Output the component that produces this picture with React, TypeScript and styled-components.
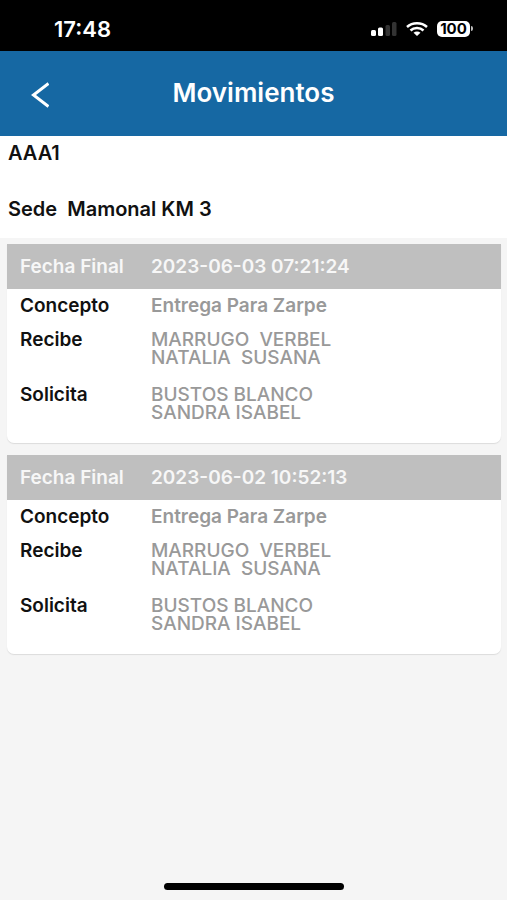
import React from "react";
import styled, { createGlobalStyle } from "styled-components";

const GlobalStyle = createGlobalStyle`
  *, *::before, *::after { box-sizing: border-box; }
  body {
    margin: 0;
    background: #f5f5f5;
    color: #111111;
    font-family: Inter, "Liberation Sans", sans-serif;
    font-size: 19px;
    font-weight: 600;
    line-height: 18px;
  }
`;

const Screen = styled.div`
  display: flex;
  flex-direction: column;
  min-height: 100vh;
`;

const StatusBar = styled.div`
  display: flex;
  align-items: center;
  justify-content: space-between;
  height: 51px;
  padding: 6px 34px 0 54px;
  background: #000000;
  color: #ffffff;
`;

const Clock = styled.time`
  font-size: 22px;
  line-height: 24px;
`;

const StatusIcons = styled.div`
  display: flex;
  align-items: center;
  gap: 9px;
`;

const BatteryGroup = styled.div`
  display: flex;
  align-items: center;
  gap: 1px;
`;

const Battery = styled.span`
  width: 33px;
  border-radius: 5px;
  background: #ffffff;
  color: #000000;
  font-size: 15px;
  font-weight: 700;
  line-height: 16px;
  text-align: center;
`;

const BatteryTip = styled.span`
  width: 2px;
  height: 5px;
  border-radius: 0 2px 2px 0;
  background: #bbbbbb;
`;

const NavBar = styled.header`
  display: grid;
  grid-template-columns: 48px 1fr 48px;
  align-items: center;
  height: 85px;
  padding: 0 16px;
  background: #1668a3;
  color: #ffffff;
`;

const BackButton = styled.button`
  display: flex;
  align-items: center;
  justify-content: center;
  height: 48px;
  padding: 2px 0 0;
  border: 0;
  background: none;
  color: inherit;
  cursor: pointer;
`;

const Title = styled.h1`
  margin: 0;
  padding-bottom: 2px;
  font-size: 26px;
  font-weight: 600;
  line-height: 28px;
  text-align: center;
`;

const Summary = styled.section`
  display: flex;
  flex-direction: column;
  gap: 38px;
  padding: 8px 8px 20px;
  background: #ffffff;
  font-size: 20px;
`;

const SummaryLine = styled.p`
  margin: 0;
  white-space: pre-wrap;
`;

const CardList = styled.main`
  display: flex;
  flex: 1;
  flex-direction: column;
  gap: 12px;
  padding: 6px 6px 12px 7px;
`;

const Card = styled.article`
  border-radius: 0 0 7px 7px;
  background: #ffffff;
  box-shadow: 0 1px 1px #dcdcdc;
`;

const FieldList = styled.dl`
  margin: 0;
`;

const Banner = styled(FieldList)`
  padding: 14px 13px 13px;
  background: #bfbfbf;
  color: #f7f7f7;
`;

const CardBody = styled(FieldList)`
  display: flex;
  flex-direction: column;
  gap: 16px;
  padding: 8px 13px 18px;
  color: #999999;
`;

const Field = styled.div`
  display: grid;
  grid-template-columns: 131px minmax(0, 1fr);
`;

const Label = styled.dt<{ $light?: boolean }>`
  color: ${({ $light }) => ($light ? "inherit" : "#111111")};
`;

const Value = styled.dd<{ $name?: boolean }>`
  margin: 0;
  padding-bottom: ${({ $name }) => ($name ? "3px" : "0")};
  font-weight: ${({ $name }) => ($name ? 500 : 600)};
  white-space: pre-wrap;
`;

const Footer = styled.footer`
  display: flex;
  justify-content: center;
  padding-bottom: 10px;
`;

const HomeIndicator = styled.div`
  width: 180px;
  height: 7px;
  border-radius: 4px;
  background: #000000;
`;

interface Movement {
  date: string;
  concept: string;
  receiver: string;
  requester: string;
}

const movements: Movement[] = [
  {
    date: "2023-06-03 07:21:24",
    concept: "Entrega Para Zarpe",
    receiver: "MARRUGO  VERBEL\nNATALIA  SUSANA",
    requester: "BUSTOS BLANCO\nSANDRA ISABEL",
  },
  {
    date: "2023-06-02 10:52:13",
    concept: "Entrega Para Zarpe",
    receiver: "MARRUGO  VERBEL\nNATALIA  SUSANA",
    requester: "BUSTOS BLANCO\nSANDRA ISABEL",
  },
];

const SignalIcon = () => (
  <svg width="26" height="14" viewBox="0 0 26 14" aria-hidden="true">
    <rect x="0" y="8" width="5" height="6" rx="1.5" fill="#fff" />
    <rect x="7" y="5.5" width="5" height="8.5" rx="1.5" fill="#fff" />
    <rect x="14.500" y="3" width="4.500" height="11" rx="1.5" fill="#333" />
    <rect x="21" y="0" width="4.500" height="14" rx="1.5" fill="#333" />
  </svg>
);

const WifiIcon = () => (
  <svg width="22" height="14" viewBox="0 0 22 14" aria-hidden="true" fill="none" stroke="#fff" strokeWidth="2.5">
    <path d="M1 5C6.500 0 15.500 0 21 5" />
    <path d="M4.500 8.500C8 5.200 14 5.200 17.500 8.500" />
    <path d="M7.500 10.800C9.500 9 12.500 9 14.500 10.800L11 14Z" fill="#fff" stroke="none" />
  </svg>
);

const ChevronIcon = () => (
  <svg width="18" height="26" viewBox="0 0 18 26" aria-hidden="true" fill="none" stroke="currentColor" strokeWidth="3">
    <path d="M17.500 1.500L2.500 13L17.500 24.500" />
  </svg>
);

const MovementCard = ({ movement }: { movement: Movement }) => (
  <Card>
    <Banner>
      <Field>
        <Label $light>Fecha Final</Label>
        <Value>{movement.date}</Value>
      </Field>
    </Banner>
    <CardBody>
      <Field>
        <Label>Concepto</Label>
        <Value>{movement.concept}</Value>
      </Field>
      <Field>
        <Label>Recibe</Label>
        <Value $name>{movement.receiver}</Value>
      </Field>
      <Field>
        <Label>Solicita</Label>
        <Value $name>{movement.requester}</Value>
      </Field>
    </CardBody>
  </Card>
);

export default function App() {
  return (
    <>
      <GlobalStyle />
      <Screen>
        <StatusBar>
          <Clock>17:48</Clock>
          <StatusIcons>
            <SignalIcon />
            <WifiIcon />
            <BatteryGroup>
              <Battery>100</Battery>
              <BatteryTip />
            </BatteryGroup>
          </StatusIcons>
        </StatusBar>
        <NavBar>
          <BackButton type="button" aria-label="Volver">
            <ChevronIcon />
          </BackButton>
          <Title>Movimientos</Title>
        </NavBar>
        <Summary>
          <SummaryLine>AAA1</SummaryLine>
          <SummaryLine>{"Sede  Mamonal KM 3"}</SummaryLine>
        </Summary>
        <CardList>
          {movements.map((movement) => (
            <MovementCard key={movement.date} movement={movement} />
          ))}
        </CardList>
        <Footer>
          <HomeIndicator />
        </Footer>
      </Screen>
    </>
  );
}
